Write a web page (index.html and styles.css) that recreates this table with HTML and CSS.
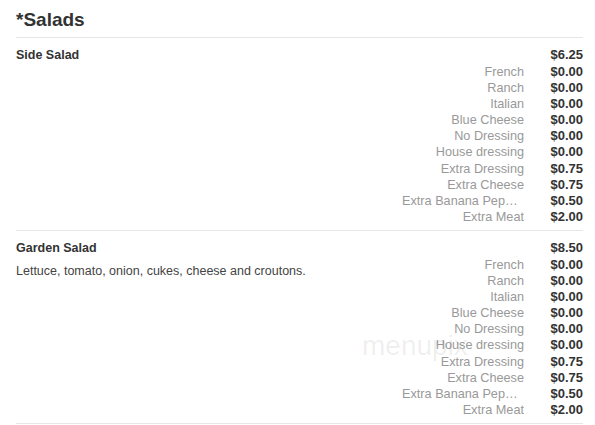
FILE: index.html
```html
<!DOCTYPE html>
<html lang="en">
<head>
  <meta charset="UTF-8" />
  <title>Salads</title>
  <link rel="stylesheet" href="styles.css">
</head>
<body>
  <div class="menu">
    <h1 class="section-title">*Salads</h1>

    <div class="item">
      <div class="item-head">
        <span class="item-name">Side Salad</span>
        <span class="price">$6.25</span>
      </div>
      <div class="item-body">
        <p class="item-desc"></p>
        <div class="options">
          <span class="opt">French</span><span class="price">$0.00</span>
          <span class="opt">Ranch</span><span class="price">$0.00</span>
          <span class="opt">Italian</span><span class="price">$0.00</span>
          <span class="opt">Blue Cheese</span><span class="price">$0.00</span>
          <span class="opt">No Dressing</span><span class="price">$0.00</span>
          <span class="opt">House dressing</span><span class="price">$0.00</span>
          <span class="opt">Extra Dressing</span><span class="price">$0.75</span>
          <span class="opt">Extra Cheese</span><span class="price">$0.75</span>
          <span class="opt">Extra Banana Peppers</span><span class="price">$0.50</span>
          <span class="opt">Extra Meat</span><span class="price">$2.00</span>
        </div>
      </div>
    </div>

    <div class="item">
      <div class="item-head">
        <span class="item-name">Garden Salad</span>
        <span class="price">$8.50</span>
      </div>
      <div class="item-body">
        <p class="item-desc">Lettuce, tomato, onion, cukes, cheese and croutons.</p>
        <div class="options">
          <span class="opt">French</span><span class="price">$0.00</span>
          <span class="opt">Ranch</span><span class="price">$0.00</span>
          <span class="opt">Italian</span><span class="price">$0.00</span>
          <span class="opt">Blue Cheese</span><span class="price">$0.00</span>
          <span class="opt">No Dressing</span><span class="price">$0.00</span>
          <span class="opt">House dressing</span><span class="price">$0.00</span>
          <span class="opt">Extra Dressing</span><span class="price">$0.75</span>
          <span class="opt">Extra Cheese</span><span class="price">$0.75</span>
          <span class="opt">Extra Banana Peppers</span><span class="price">$0.50</span>
          <span class="opt">Extra Meat</span><span class="price">$2.00</span>
        </div>
      </div>
    </div>
  </div>

  <div class="watermark">menupix</div>
</body>
</html>
```

FILE: styles.css
```css
* {
  box-sizing: border-box;
  margin: 0;
  padding: 0;
}

html, body {
  background: #fff;
  color: #333;
  font-family: "Liberation Sans", Arial, sans-serif;
  font-size: 12.5px;
}

body {
  position: relative;
  overflow: hidden;
}

.menu {
  padding: 8px 12px 0 16px;
}

.section-title {
  font-size: 19px;
  font-weight: bold;
  line-height: 23px;
  color: #333;
  padding-bottom: 6px;
  border-bottom: 1px solid #e6e6e6;
}

.item {
  padding: 9px 0 5px;
  border-bottom: 1px solid #e6e6e6;
}

.item-head {
  display: flex;
  justify-content: space-between;
  line-height: 16px;
}

.item-name {
  font-weight: bold;
  font-size: 12.5px;
}

.price {
  font-weight: bold;
  font-size: 13px;
  width: 35px;
  text-align: right;
}

.item-body {
  display: flex;
  justify-content: space-between;
  align-items: flex-start;
}

.item-desc {
  flex: 1;
  margin-top: 7px;
  line-height: 16px;
  color: #444;
}

.options {
  display: grid;
  grid-template-columns: 122px 35px;
  column-gap: 24px;
  margin-top: 1px;
  line-height: 16.1px;
}

.opt {
  color: #999;
  font-size: 12.7px;
  text-align: right;
  white-space: nowrap;
  overflow: hidden;
  text-overflow: ellipsis;
}

.watermark {
  position: absolute;
  left: 362px;
  top: 330px;
  font-size: 28px;
  line-height: 32px;
  color: rgba(0, 0, 0, 0.08);
  pointer-events: none;
}
```
